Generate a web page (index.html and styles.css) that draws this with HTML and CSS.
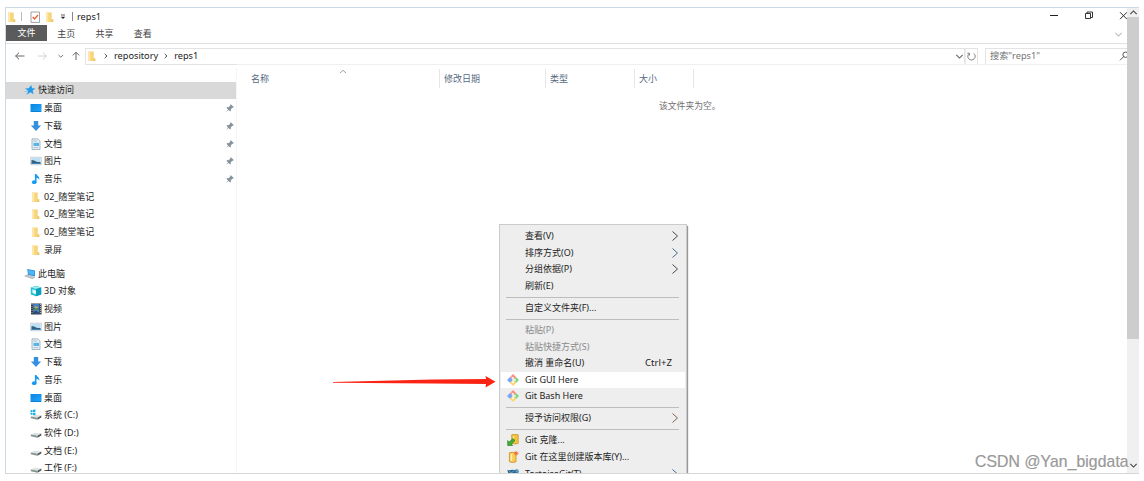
FILE: index.html
```html
<!DOCTYPE html>
<html lang="zh-CN">
<head>
<meta charset="utf-8">
<title>reps1</title>
<link rel="stylesheet" href="styles.css">
</head>
<body>
<svg class="defs" aria-hidden="true">
  <defs>
    <linearGradient id="screen" x1="0" x2="1" y1="0" y2="1"><stop offset="0" stop-color="#0a84e4"/><stop offset="1" stop-color="#22a7f8"/></linearGradient>
    <symbol id="folder" viewBox="0 0 12 12"><path d="M2 1.500h5.800v7h1.400V11H2z" fill="#f5d57f"/><path d="M2 1.500l2.200.7v9L2 10.700z" fill="#ffe8a6"/><path d="M7.800 8.300h1.400V11H7z" fill="#efc75f"/></symbol>
    <symbol id="star" viewBox="0 0 12 12"><path d="M7.200 1l.9 3.200 3.400.2-2.800 2 .8 3.900-3-2-3.400 2.200 1-3.700L1 4.600l3.700-.3z" fill="#239be8"/><path d="M.5 7.500h3M1.500 10h2" stroke="#7cc4f3" stroke-width=".8"/></symbol>
    <symbol id="desktop" viewBox="0 0 12 12"><path d="M.5 2h11v8H.5z" fill="url(#screen)"/><path d="M1 9.500h10" stroke="#0873c4" stroke-width=".7"/></symbol>
    <symbol id="download" viewBox="0 0 12 12"><path d="M3.800 1h4.400v4.500h2.900L6 11 .9 5.500h2.900z" fill="#3590df"/></symbol>
    <symbol id="doc" viewBox="0 0 12 12"><path d="M2 .9h6l2 2v8.600H2z" fill="#e9f2f8" stroke="#8a9aa6" stroke-width=".7"/><path d="M3.300 3h4M3.300 9.600h5" stroke="#8bb5d1" stroke-width=".8"/><path d="M3.500 4.800h5.500v3.200H3.500z" fill="#56b5e6"/></symbol>
    <symbol id="image" viewBox="0 0 12 12"><path d="M.7 2.200h10.600v7.600H.7z" fill="#f5f8fa" stroke="#a7b4bd" stroke-width=".6"/><path d="M1.500 3h9v6h-9z" fill="#b9e0f7"/><path d="M1.500 4.900q3 .2 5 1.800 2 .4 4 .3v2h-9z" fill="#35617e"/><path d="M1.500 8.200h9V9h-9z" fill="#3e8cc6"/></symbol>
    <symbol id="music" viewBox="0 0 12 12"><ellipse cx="4.200" cy="9.200" rx="2.300" ry="1.900" fill="#139af2"/><path d="M4.900 1h1.500c.4 2 3.600 2.200 2.800 6C8.700 5.300 7.400 4.800 6.500 4.700v4.500H4.900z" fill="#139af2"/></symbol>
    <symbol id="pc" viewBox="0 0 12 12"><path d="M3.200 1l7.800 1.500v6L4 6.800z" fill="#248edb"/><path d="M4 2l6.300 1.200v4.100L4.600 6z" fill="#50b6f4"/><path d="M.6 8l3-1.300 7.200 2.800-2.500 1.200z" fill="#c2c8cc" stroke="#8b9399" stroke-width=".4"/></symbol>
    <symbol id="cube" viewBox="0 0 12 12"><path d="M.8 2.500L6 .8l5.200 1.700v7L6 11.300.8 9.500z" fill="#29bfd6"/><path d="M1.500 2.600L6 1.200l4.500 1.400L6 4z" fill="#a6ecf2"/><path d="M6 4l5.200-1.500v7L6 11.300z" fill="#0c9fbe"/><path d="M2.400 4.200L6 5.400v3.900L2.400 8z" fill="#dffafa"/></symbol>
    <symbol id="video" viewBox="0 0 12 12"><path d="M1 .5h10.500v11H1z" fill="#35383c"/><path d="M3.200 1h6.200v4.700H3.200z" fill="#4482ce"/><path d="M3.200 6.200h6.200V11H3.200z" fill="#5186c0"/><path d="M4.200 3.500h3l1 1.500h-3z" fill="#d7af3a"/><path d="M5 5h3v2H5z" fill="#4b9445"/><path d="M3.200 9l3-1.500L9.400 10v1H3.200z" fill="#294b75"/><path d="M2 1v10.500M10.500 1v10.500" stroke="#d9dde0" stroke-width=".8" stroke-dasharray="1 1"/></symbol>
    <symbol id="disk" viewBox="0 0 12 12"><path d="M.8 7.500l4-1.700 6.500.8-3.800 2.100z" fill="#dfe2e3"/><path d="M.8 7.500l6.700 1.200v2L.8 9.200z" fill="#8b9192"/><path d="M7.500 8.700l3.800-2.100v1.800l-3.800 2.300z" fill="#4e5457"/><path d="M4.500 9.300h2" stroke="#4fba65" stroke-width=".6"/></symbol>
    <symbol id="sysdisk" viewBox="0 0 12 12"><use href="#disk"/><path d="M.5 1.200l2-.3v2.200h-2zM3 .8l2.400-.3v2.600H3zM.5 3.700h2v2.200l-2-.3zM3 3.700h2.400v2.600L3 6z" fill="#18aee5"/></symbol>
    <symbol id="pin" viewBox="0 0 10 10"><path d="M5.800 1.200l3 2.900-.7.700-.7-.1-1.600 1.600.1 1.500-.7.700L3.600 7 1 9l2-2.600L1.500 4.800l.7-.7 1.500.1 1.600-1.600-.1-.8z" fill="#87939c"/></symbol>
    <symbol id="git" viewBox="0 0 12 12"><path d="M6 0l3 3-3 3-3-3z" fill="#ff8983"/><path d="M3 3l3 3-3 3-3-3z" fill="#78a7f8"/><path d="M9 3l3 3-3 3-3-3z" fill="#83d478"/><path d="M6 6l3 3-3 3-3-3z" fill="#ffd66d"/><path d="M4.700 2.500L6 4v4.500M6 4.500l2 1.600" fill="none" stroke="#fff" stroke-width=".9"/><circle cx="6" cy="8.300" r=".9" fill="#fff"/><circle cx="8" cy="6.100" r=".9" fill="#fff"/><circle cx="6" cy="4" r=".8" fill="#fff"/></symbol>
    <symbol id="clone" viewBox="0 0 12 12"><path d="M4.700.8q3-.8 6.500 0v8.700q-3 .9-6.500 0z" fill="#f2c442" stroke="#c28c19" stroke-width=".7"/><path d="M6.500 2v6" stroke="#fff0a4"/><path d="M.7 6.500v5h5L4.300 10 8 6.500 6 4.600 2.200 8z" fill="#3fae30" stroke="#20731b" stroke-width=".6"/></symbol>
    <symbol id="create" viewBox="0 0 12 12"><path d="M2.400 1.800q3-.9 6.600 0v9q-3 1.200-6.600 0z" fill="#f8cd58" stroke="#d18a1b" stroke-width=".8"/><path d="M4.400 3v7" stroke="#fff2b3" stroke-width="1.400"/><path d="M9.200 0v4.600M7 2.300h4.600M7.600.7l3.200 3.200M10.800.7L7.600 3.900" stroke="#f1662e" stroke-width=".8"/></symbol>
    <symbol id="tortoise" viewBox="0 0 12 12"><ellipse cx="5.500" cy="5" rx="4.500" ry="3.300" fill="#28658e"/><path d="M2 3l2.500 2L7 2.500M4.500 5L6 8" fill="none" stroke="#87bfdc" stroke-width=".8"/><path d="M0 2.200l3 .3-1.500 2z" fill="#24577a"/><circle cx="9.700" cy="3.200" r="2" fill="#367cac"/><circle cx="10" cy="3" r=".6" fill="#fff"/><path d="M1 7l-1 2h3zM8 7l2 2H7z" fill="#31698b"/></symbol>
    <symbol id="right" viewBox="0 0 8 12"><path d="M1.500 1.500L6.500 6l-5 4.500" fill="none" stroke="currentColor"/></symbol>
    <symbol id="crumb" viewBox="0 0 6 6"><path d="M1.700.8L4 3 1.700 5.200" fill="none" stroke="currentColor"/></symbol>
    <symbol id="chev" viewBox="0 0 8 8"><path d="M1.200 2.600L4 5.400l2.800-2.800" fill="none" stroke="currentColor"/></symbol>
  </defs>
</svg>
<div class="window">
  <div class="explorer">
    <header class="titlebar">
      <svg class="ico"><use href="#folder"/></svg><i class="bar b1"></i>
      <svg class="ico check" viewBox="0 0 12 12"><path d="M2 1h8.500v10.400H2z" fill="#fff" stroke="#8c8c8c" stroke-width=".8"/><path d="M3.700 6l1.800 2L9 4" fill="none" stroke="#e76239" stroke-width="1.400"/></svg>
      <svg class="ico f2"><use href="#folder"/></svg>
      <svg class="qat" viewBox="0 0 6 6"><path d="M1 1h4" stroke="#333" stroke-width=".8"/><path d="M.7 2.800h4.600L3 5z" fill="#222"/></svg>
      <i class="bar b2"></i><span class="title">reps1</span>
      <svg class="win" viewBox="0 0 86 12"><path d="M4 5.500h8" stroke="#222"/><path d="M39.500 3.500h5v5h-5zM41 3.500v-1.500h5.500v5.500H45" fill="none" stroke="#333"/><path d="M74 2.200l7 7M81 2.200l-7 7" stroke="#333"/></svg>
    </header>
    <nav class="tabs"><span class="tab file">文件</span><span class="tab">主页</span><span class="tab">共享</span><span class="tab">查看</span><svg class="chev ribbon"><use href="#chev"/></svg></nav>
    <div class="address">
      <svg class="navs" viewBox="0 0 80 16"><g fill="none"><path d="M19.500 8H10.600M14 4.700L10.600 8l3.400 3.300" stroke="#666"/><path d="M33 8h8.500M38 4.700L41.400 8 38 11.300" stroke="#d2d2d2"/><path d="M53.500 7l2.300 2.200L58.100 7" stroke="#777"/><path d="M71 12V4.200M67.800 7.400L71 4.200l3.200 3.200" stroke="#666"/></g></svg>
      <div class="path"><svg class="ico"><use href="#folder"/></svg><svg class="crumb"><use href="#crumb"/></svg><span>repository</span><svg class="crumb"><use href="#crumb"/></svg><span>reps1</span><svg class="chev drop"><use href="#chev"/></svg></div>
      <div class="refresh"><svg viewBox="0 0 12 12"><path d="M3.500 2.700a4 4 0 1 0 5 0M3.800 5V2.500H1.500" fill="none" stroke="#777"/></svg></div>
      <div class="search"><span>搜索"reps1"</span><svg viewBox="0 0 10 10"><circle cx="6.600" cy="3.700" r="2.700" fill="none" stroke="#555"/><path d="M4.700 5.600L1 9.300" stroke="#555"/></svg></div>
    </div>
    <div class="body">
      <aside class="side">
        <div class="row head on"><svg class="ico"><use href="#star"/></svg><span>快速访问</span></div>
        <div class="row"><svg class="ico"><use href="#desktop"/></svg><span>桌面</span><svg class="pin"><use href="#pin"/></svg></div>
        <div class="row"><svg class="ico"><use href="#download"/></svg><span>下载</span><svg class="pin"><use href="#pin"/></svg></div>
        <div class="row"><svg class="ico"><use href="#doc"/></svg><span>文档</span><svg class="pin"><use href="#pin"/></svg></div>
        <div class="row"><svg class="ico"><use href="#image"/></svg><span>图片</span><svg class="pin"><use href="#pin"/></svg></div>
        <div class="row"><svg class="ico"><use href="#music"/></svg><span>音乐</span><svg class="pin"><use href="#pin"/></svg></div>
        <div class="row"><svg class="ico"><use href="#folder"/></svg><span>02_随堂笔记</span></div>
        <div class="row"><svg class="ico"><use href="#folder"/></svg><span>02_随堂笔记</span></div>
        <div class="row"><svg class="ico"><use href="#folder"/></svg><span>02_随堂笔记</span></div>
        <div class="row"><svg class="ico"><use href="#folder"/></svg><span>录屏</span></div>
        <div class="row head pc"><svg class="ico"><use href="#pc"/></svg><span>此电脑</span></div>
        <div class="row"><svg class="ico"><use href="#cube"/></svg><span>3D 对象</span></div>
        <div class="row"><svg class="ico"><use href="#video"/></svg><span>视频</span></div>
        <div class="row"><svg class="ico"><use href="#image"/></svg><span>图片</span></div>
        <div class="row"><svg class="ico"><use href="#doc"/></svg><span>文档</span></div>
        <div class="row"><svg class="ico"><use href="#download"/></svg><span>下载</span></div>
        <div class="row"><svg class="ico"><use href="#music"/></svg><span>音乐</span></div>
        <div class="row"><svg class="ico"><use href="#desktop"/></svg><span>桌面</span></div>
        <div class="row"><svg class="ico"><use href="#sysdisk"/></svg><span>系统 (C:)</span></div>
        <div class="row"><svg class="ico"><use href="#disk"/></svg><span>软件 (D:)</span></div>
        <div class="row"><svg class="ico"><use href="#disk"/></svg><span>文档 (E:)</span></div>
        <div class="row"><svg class="ico"><use href="#disk"/></svg><span>工作 (F:)</span></div>
      </aside>
      <main class="content">
        <div class="cols"><div class="col name">名称<svg class="sort" viewBox="0 0 8 5"><path d="M1 4l3-2.700L7 4" fill="none" stroke="#888" stroke-width=".8"/></svg></div><div class="col date">修改日期</div><div class="col type">类型</div><div class="col size">大小</div></div>
        <p class="empty">该文件夹为空。</p>
      </main>
    </div>
  </div>
  <div class="scroll"><svg class="chev up"><use href="#chev"/></svg><div class="thumb"></div><svg class="chev down"><use href="#chev"/></svg></div>
  <div class="menu">
    <div class="item">查看(V)<svg class="more"><use href="#right"/></svg></div>
    <div class="item">排序方式(O)<svg class="more blue"><use href="#right"/></svg></div>
    <div class="item">分组依据(P)<svg class="more"><use href="#right"/></svg></div>
    <div class="item">刷新(E)</div>
    <div class="sep"></div>
    <div class="item">自定义文件夹(F)...</div>
    <div class="sep"></div>
    <div class="item off">粘贴(P)</div>
    <div class="item off">粘贴快捷方式(S)</div>
    <div class="item">撤消 重命名(U)<span class="key">Ctrl+Z</span></div>
    <div class="item hot"><svg class="mi"><use href="#git"/></svg>Git GUI Here</div>
    <div class="item"><svg class="mi"><use href="#git"/></svg>Git Bash Here</div>
    <div class="sep"></div>
    <div class="item">授予访问权限(G)<svg class="more brown"><use href="#right"/></svg></div>
    <div class="sep"></div>
    <div class="item"><svg class="mi"><use href="#clone"/></svg>Git 克隆...</div>
    <div class="item"><svg class="mi"><use href="#create"/></svg>Git 在这里创建版本库(Y)...</div>
    <div class="item"><svg class="mi"><use href="#tortoise"/></svg>TortoiseGit(T)<svg class="more blue"><use href="#right"/></svg></div>
  </div>
  <svg class="arrow" viewBox="0 0 164 14"><path d="M0 7L100 4.600 153 4 152.500 1 162.500 6.700l-10 5.800.5-3.500L100 8.500 0 7.700z" fill="#fb2414"/></svg>
</div>
<div class="mark">CSDN @Yan_bigdata</div>
</body>
</html>
```
FILE: styles.css
```css
* { box-sizing: border-box; }
body { margin: 0; width: 1144px; height: 481px; overflow: hidden; background: #fff; color: #222; padding: 7px 5px; font: 9px/12px "Noto Sans", "Noto Sans CJK SC", sans-serif; position: relative; }
svg { display: block; flex: none; }
.defs { position: absolute; width: 0; height: 0; }
.window { position: relative; display: flex; height: 467px; overflow: hidden; border: 1px solid #cbd9e6; border-right: 0; border-bottom-color: #d6d6d6; }
.explorer { flex: 1; min-width: 0; }
.ico { width: 12px; height: 12px; }
.chev { width: 9px; height: 9px; }

.titlebar { display: flex; align-items: center; height: 17px; }
.titlebar .ico { margin-left: 0; }
.bar { width: 1px; height: 9px; background: #bbb; }
.b1 { margin-left: 3px; }
.titlebar .check { margin-left: 7px; }
.titlebar .f2 { margin-left: 3px; }
.qat { width: 6px; height: 6px; margin-left: 4px; }
.b2 { margin: 0 4px 0 6px; background: #888; }
.title { font-size: 9.2px; }
.win { width: 86px; height: 12px; margin: -1px -5px 0 auto; }

.tabs { display: flex; align-items: center; height: 19px; border-bottom: 1px solid #dfe1e3; padding-bottom: 1px; color: #444; }
.tab { width: 38.3px; text-align: center; }
.tab.file { width: 41px; height: 16px; line-height: 16px; background: #5b5b5b; color: #fff; align-self: flex-start; }
.ribbon { color: #bbb; margin: 1px 4px 0 auto; }

.address { display: flex; align-items: center; height: 24px; }
.navs { width: 80px; height: 16px; margin-left: -1px; }
.path { display: flex; align-items: center; flex: 1; height: 17px; border: 1px solid #e3e3e3; font-size: 9.2px; }
.crumb { width: 6px; height: 6px; margin: 0 5px; color: #555; }
.drop { margin-left: auto; color: #666; }
.refresh { width: 13px; height: 17px; border: 1px solid #e3e3e3; border-left-color: #eee; padding-top: 2px; }
.refresh svg { width: 11px; height: 11px; }
.search { display: flex; align-items: center; justify-content: space-between; width: 142px; height: 17px; margin-left: 7px; border: 1px solid #e3e3e3; border-right: 0; padding-left: 4px; color: #747474; font-size: 9.2px; }
.search svg { width: 10px; height: 10px; margin-right: -2px; }

.body { display: flex; height: 405px; }
.side { width: 231px; border-right: 1px solid #f5f5f5; padding-top: 13.5px; }
.row { display: flex; align-items: center; gap: 2.5px; height: 17.72px; padding-left: 23.5px; }
.row.head { padding-left: 18px; gap: 2px; }
.row.on { background: #d9d9d9; }
.row.pc { margin-top: 6px; }
.pin { width: 10px; height: 10px; margin: 0 1px 0 auto; }
.content { flex: 1; border-top: 1px solid #f0f0f0; margin-top: -4px; }
.cols { display: flex; height: 19px; margin-top: 4px; color: #55697f; }
.col { border-right: 1px solid #e7e7e7; padding: 4px 0 0 4px; display: flex; }
.name { width: 203px; padding-left: 14px; }
.date { width: 106px; }
.type { width: 89px; }
.size { width: 59px; }
.sort { width: 8px; height: 5px; margin: -4px 0 0 70px; }
.empty { margin: 12px 0 0 422px; color: #707070; font-size: 8.8px; }

.scroll { display: flex; flex-direction: column; width: 12px; background: #f0f0f0; color: #444; padding-left: 1px; }
.up { transform: rotate(180deg); margin: 0 1px; }
.thumb { height: 322px; margin-left: -1px; background: #cdcdcd; }
.down { margin: auto 1px 3px; }

.menu { position: absolute; left: 493px; top: 216px; width: 188px; padding: 3px 1px; background: #eee; border: 1px solid #cbcbcb; box-shadow: 1px 2px 1px #999; }
.item { display: flex; align-items: center; height: 16.6px; padding: 0 6px 0 24px; white-space: pre; }
.item.off { color: #8a8a8a; }
.item.hot { background: #fff; }
.mi { width: 12px; height: 12px; margin: 0 6px 0 -18px; }
.more { width: 8px; height: 12px; margin-left: auto; color: #444; }
.blue { color: #456790; }
.brown { color: #81604a; }
.key { margin: 0 7px 0 auto; font-size: 9.6px; }
.sep { height: 5.4px; margin: 0 6px 0 5px; display: flex; align-items: center; }
.sep::before { content: ""; flex: 1; height: 1px; background: #bdbdbd; }
.arrow { position: absolute; left: 327px; top: 367px; width: 164px; height: 14px; }
.mark { position: absolute; left: 975px; top: 452px; font: 15.9px/20px "Liberation Sans", sans-serif; color: #999; text-shadow: -0.5px -0.5px 0 #ddd; white-space: nowrap; }
```
